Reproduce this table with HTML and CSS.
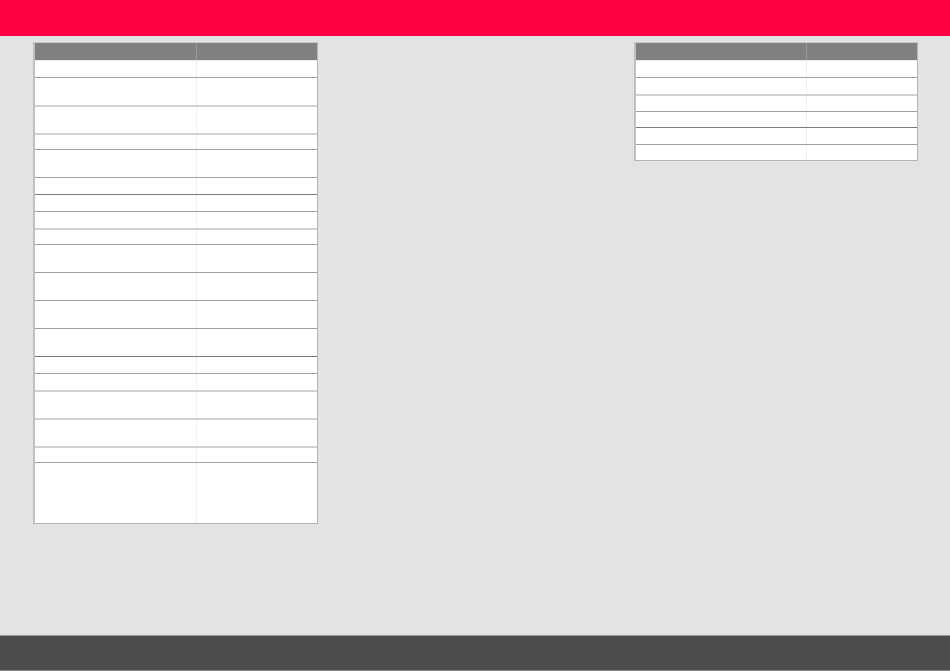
FILE: index.html
```html
<!DOCTYPE html>
<html lang="en">
<head>
  <meta charset="UTF-8">
  <meta name="viewport" content="width=device-width, initial-scale=1.0">
  <title>Report</title>
  <link rel="stylesheet" href="styles.css">
</head>
<body>
  <!-- Top Bar -->
  <header class="topbar"></header>

  <!-- Content -->
  <main class="content">
    <div class="sheet sheet-left">
      <div class="sheet-head"><div class="cell"></div><div class="cell"></div></div>
      <div class="row short first"><div class="cell"></div><div class="cell"></div></div>
      <div class="row tall"><div class="cell"></div><div class="cell"></div></div>
      <div class="row tall light"><div class="cell"></div><div class="cell"></div></div>
      <div class="row thin light"><div class="cell"></div><div class="cell"></div></div>
      <div class="row tall"><div class="cell"></div><div class="cell"></div></div>
      <div class="row short"><div class="cell"></div><div class="cell"></div></div>
      <div class="row short dark"><div class="cell"></div><div class="cell"></div></div>
      <div class="row short"><div class="cell"></div><div class="cell"></div></div>
      <div class="row thin light"><div class="cell"></div><div class="cell"></div></div>
      <div class="row tall"><div class="cell"></div><div class="cell"></div></div>
      <div class="row tall"><div class="cell"></div><div class="cell"></div></div>
      <div class="row tall"><div class="cell"></div><div class="cell"></div></div>
      <div class="row tall"><div class="cell"></div><div class="cell"></div></div>
      <div class="row short dark"><div class="cell"></div><div class="cell"></div></div>
      <div class="row short"><div class="cell"></div><div class="cell"></div></div>
      <div class="row tall light"><div class="cell"></div><div class="cell"></div></div>
      <div class="row tall light"><div class="cell"></div><div class="cell"></div></div>
      <div class="row thin light"><div class="cell"></div><div class="cell"></div></div>
      <div class="row notes"><div class="cell"></div><div class="cell"></div></div>
    </div>

    <div class="sheet sheet-right">
      <div class="sheet-head"><div class="cell"></div><div class="cell"></div></div>
      <div class="row short first"><div class="cell"></div><div class="cell"></div></div>
      <div class="row short"><div class="cell"></div><div class="cell"></div></div>
      <div class="row short light"><div class="cell"></div><div class="cell"></div></div>
      <div class="row thin"><div class="cell"></div><div class="cell"></div></div>
      <div class="row short dark"><div class="cell"></div><div class="cell"></div></div>
      <div class="row thin"><div class="cell"></div><div class="cell"></div></div>
    </div>
  </main>

  <!-- Bottom Bar -->
  <footer class="bottombar"></footer>
</body>
</html>
```

FILE: styles.css
```css
* {
  margin: 0;
  padding: 0;
  box-sizing: border-box;
}

html, body {
  height: 100%;
}

body {
  font-family: "Liberation Sans", Arial, sans-serif;
  background-color: #e2e3e5;
  color: #333;
  display: flex;
  flex-direction: column;
}

/* Top Bar */
.topbar {
  height: 36px;
  flex-shrink: 0;
  background-color: #ff0040;
}

/* Content */
.content {
  flex: 1;
  display: flex;
  justify-content: space-between;
  align-items: flex-start;
  padding: 6px 32px 0 33px;
}

/* Sheets */
.sheet {
  display: flex;
  flex-direction: column;
  background-color: #fff;
  border: 1px solid #b4b4b4;
  border-left: 2px solid #c0c0c0;
  border-top-color: #c8c8c8;
}

.sheet-left {
  width: 285px;
}

.sheet-right {
  width: 284px;
}

.sheet-head,
.row {
  display: flex;
}

.sheet-head {
  height: 17px;
  background-color: #808080;
}

.sheet-left .cell:first-child {
  width: 161px;
}

.sheet-right .cell:first-child {
  width: 170px;
}

.cell {
  flex-shrink: 0;
}

.cell:last-child {
  flex: 1;
}

.sheet-head .cell:last-child {
  border-left: 1px solid #999;
}

.row .cell:last-child {
  border-left: 1px solid #f0f0f0;
}

.row {
  border-top: 1px solid #a0a0a0;
}

.row.first {
  border-top-color: #ececec;
}

.row.light {
  border-top: 2px solid #d2d2d2;
}

.row.dark {
  border-top-color: #7a7a7a;
}

.row.thin {
  height: 16px;
}

.row.short {
  height: 17px;
}

.row.tall {
  height: 28px;
}

.row.notes {
  height: 61px;
}

/* Bottom Bar */
.bottombar {
  height: 36px;
  flex-shrink: 0;
  background-color: #4d4d4d;
  border-top: 1px solid #999;
  border-bottom: 1px solid #888;
}
```
